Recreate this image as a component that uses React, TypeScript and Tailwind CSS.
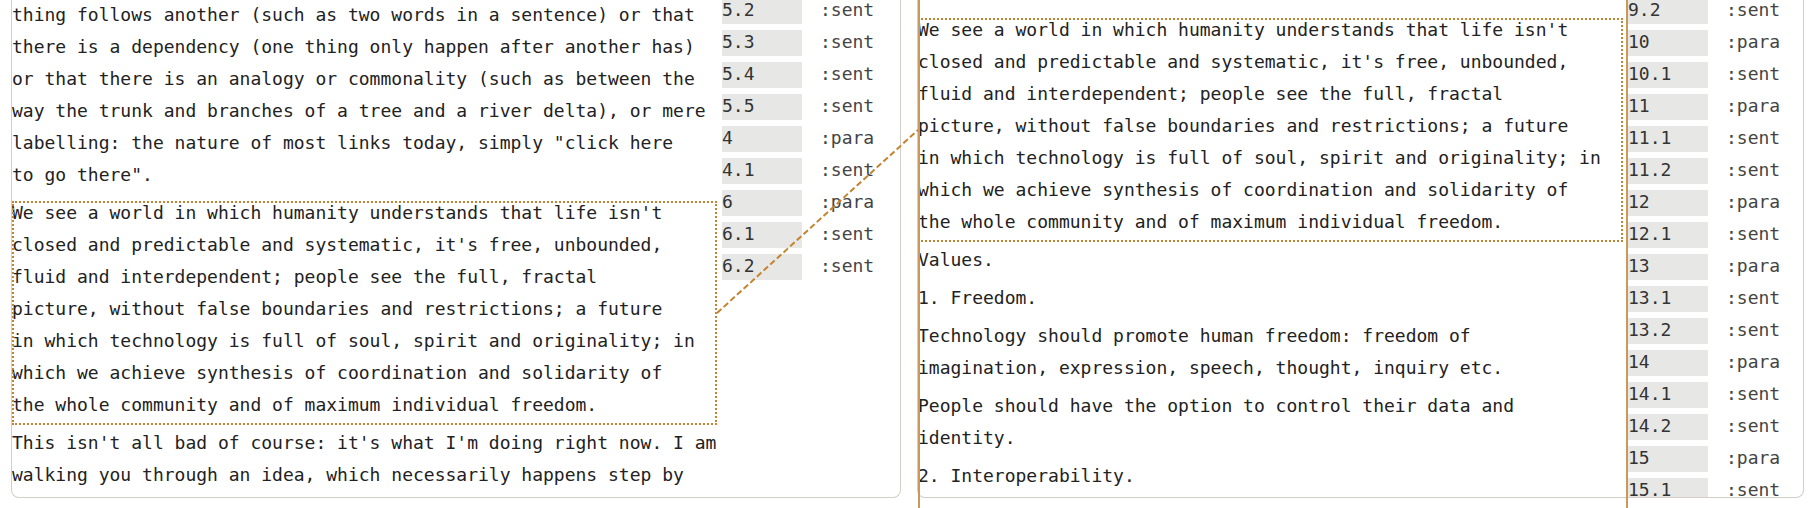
import React from "react";

type Para = { lines: string[]; marked?: boolean };
type Label = { n: string; kind: "sent" | "para" };

const leftParas: Para[] = [
  {
    lines: [
      "thing follows another (such as two words in a sentence) or that",
      "there is a dependency (one thing only happen after another has)",
      "or that there is an analogy or commonality (such as between the",
      "way the trunk and branches of a tree and a river delta), or mere",
      'labelling: the nature of most links today, simply "click here',
      'to go there".',
    ],
  },
  {
    marked: true,
    lines: [
      "We see a world in which humanity understands that life isn't",
      "closed and predictable and systematic, it's free, unbounded,",
      "fluid and interdependent; people see the full, fractal",
      "picture, without false boundaries and restrictions; a future",
      "in which technology is full of soul, spirit and originality; in",
      "which we achieve synthesis of coordination and solidarity of",
      "the whole community and of maximum individual freedom.",
    ],
  },
  {
    lines: [
      "This isn't all bad of course: it's what I'm doing right now. I am",
      "walking you through an idea, which necessarily happens step by",
    ],
  },
];

const rightParas: Para[] = [
  { marked: true, lines: leftParas[1].lines },
  { lines: ["Values."] },
  { lines: ["1. Freedom."] },
  {
    lines: [
      "Technology should promote human freedom: freedom of",
      "imagination, expression, speech, thought, inquiry etc.",
    ],
  },
  {
    lines: [
      "People should have the option to control their data and",
      "identity.",
    ],
  },
  { lines: ["2. Interoperability."] },
];

const leftLabels: Label[] = [
  { n: "5.2", kind: "sent" },
  { n: "5.3", kind: "sent" },
  { n: "5.4", kind: "sent" },
  { n: "5.5", kind: "sent" },
  { n: "4", kind: "para" },
  { n: "4.1", kind: "sent" },
  { n: "6", kind: "para" },
  { n: "6.1", kind: "sent" },
  { n: "6.2", kind: "sent" },
];

const rightLabels: Label[] = [
  { n: "9.2", kind: "sent" },
  { n: "10", kind: "para" },
  { n: "10.1", kind: "sent" },
  { n: "11", kind: "para" },
  { n: "11.1", kind: "sent" },
  { n: "11.2", kind: "sent" },
  { n: "12", kind: "para" },
  { n: "12.1", kind: "sent" },
  { n: "13", kind: "para" },
  { n: "13.1", kind: "sent" },
  { n: "13.2", kind: "sent" },
  { n: "14", kind: "para" },
  { n: "14.1", kind: "sent" },
  { n: "14.2", kind: "sent" },
  { n: "15", kind: "para" },
  { n: "15.1", kind: "sent" },
];

const Panel = ({
  paras,
  labels,
  top,
  width,
}: {
  paras: Para[];
  labels: Label[];
  top: string;
  width: string;
}) => {
  return (
    <div className={`flex h-[498px] shrink-0 gap-[5px] overflow-hidden rounded-b-lg border-x border-b border-[#d3cec8] ${width}`}>
      <div className={`w-[705px] shrink-0 ${top}`}>
        {paras.map((p, i) => (
          <div
            key={i}
            className={
              p.marked
                ? "mb-1.5 outline-2 outline-dotted outline-[#c4832f] -outline-offset-2"
                : "mb-1.5"
            }
          >
            {p.lines.map((line, j) => (
              <div key={j} className="h-8 whitespace-pre leading-[24px]">
                {line}
              </div>
            ))}
          </div>
        ))}
      </div>
      <div className="-mt-[2px] shrink-0">
        {labels.map((l) => (
          <div key={l.n} className="flex h-8 items-start">
            <div className="h-[26px] w-[80px] bg-[#e7e8e5] leading-[24px] text-[#333]">{l.n}</div>
            <div className="ml-[18px] leading-[24px] text-[#444]">:{l.kind}</div>
          </div>
        ))}
      </div>
    </div>
  );
};

export default function App() {
  return (
    <div className="relative h-[508px] w-[1818px] overflow-hidden bg-white font-['DejaVu_Sans_Mono',monospace] text-[18px] text-[#222]">
      <div className="flex gap-4 pl-[11px]">
        <Panel paras={leftParas} labels={leftLabels} top="pt-[3px]" width="w-[890px]" />
        <Panel paras={rightParas} labels={rightLabels} top="pt-[18px]" width="w-[887px]" />
      </div>

      {/* link beam between the two copies of the paragraph */}
      <svg className="pointer-events-none absolute inset-0" width="1818" height="508">
        <line x1="919" y1="0" x2="919" y2="508" stroke="#c9995c" strokeWidth="2" />
        <line x1="1627" y1="0" x2="1627" y2="508" stroke="#c9995c" strokeWidth="2" />
        <line
          x1="717"
          y1="313"
          x2="918"
          y2="130"
          stroke="#c4832f"
          strokeWidth="2"
          strokeDasharray="6 3"
        />
      </svg>
    </div>
  );
}
